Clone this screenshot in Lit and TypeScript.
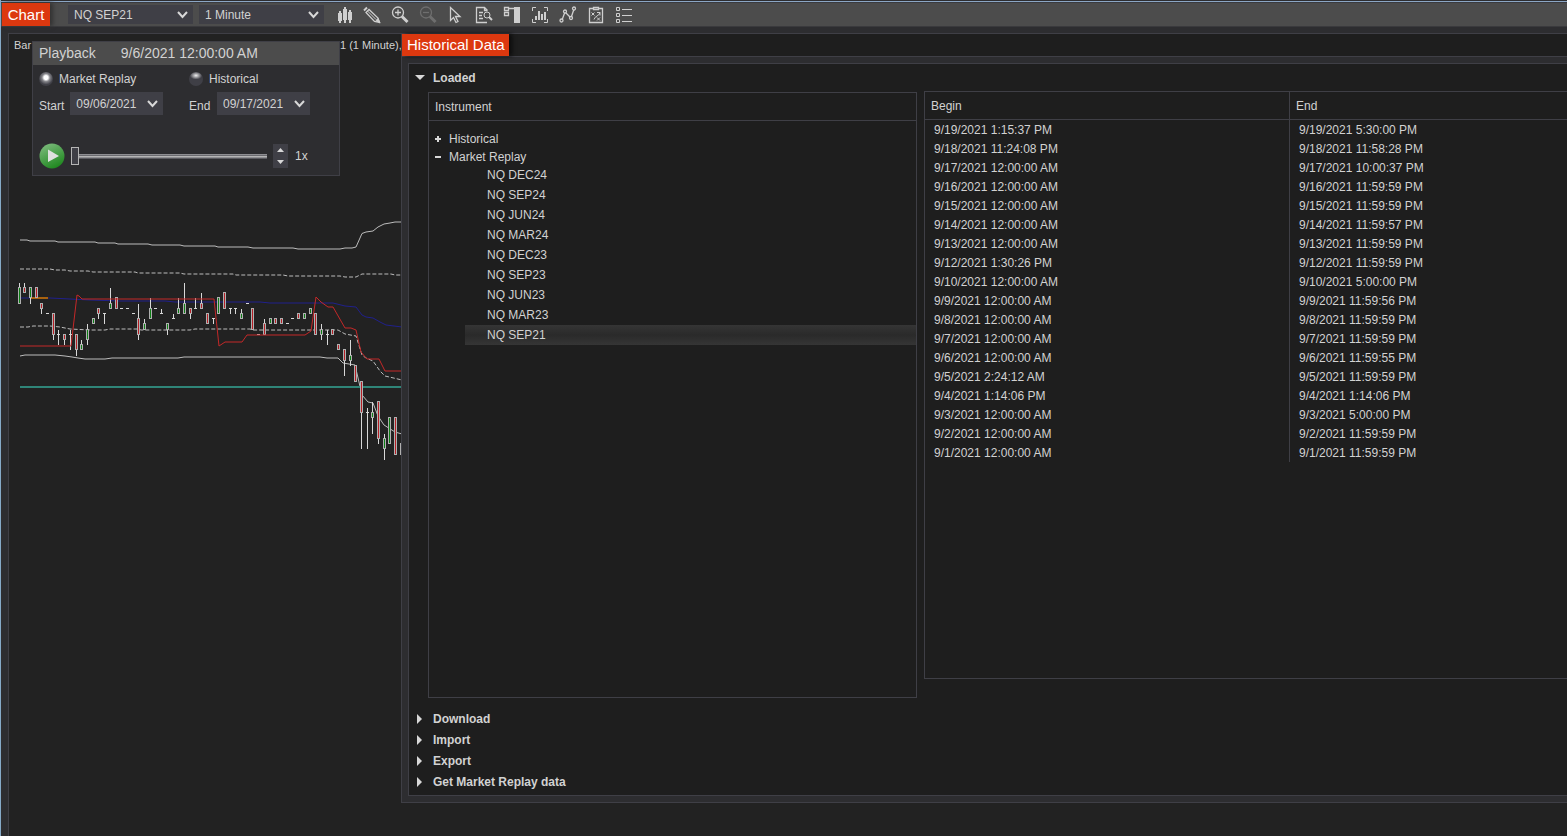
import { LitElement, html, css, svg } from "lit";
import { customElement, property, state } from "lit/decorators.js";
import { classMap } from "lit/directives/class-map.js";

type Candle = [x: number, high: number, top: number, bottom: number, low: number, kind: "up" | "down" | "flat"];

const CANDLES: Candle[] = [
  [19, 283, 287, 304, 304, "up"], [24, 283, 287, 293, 293, "down"], [30, 287, 287, 298, 304, "up"],
  [36, 287, 287, 298, 298, "down"], [41, 303, 303, 309, 314, "down"], [47, 313, 313, 313, 314, "flat"],
  [53, 313, 313, 335, 340, "down"], [58, 330, 334, 334, 345, "flat"], [64, 334, 334, 340, 345, "down"],
  [70, 330, 334, 334, 350, "flat"], [76, 334, 334, 350, 356, "down"], [81, 340, 344, 350, 350, "up"],
  [87, 324, 329, 340, 345, "up"], [93, 318, 318, 324, 324, "up"], [98, 308, 308, 314, 319, "down"],
  [104, 313, 313, 313, 324, "flat"], [110, 288, 303, 309, 309, "up"], [116, 297, 297, 309, 309, "down"],
  [121, 308, 308, 308, 309, "flat"], [127, 308, 308, 308, 309, "flat"], [133, 313, 313, 313, 314, "flat"],
  [138, 304, 318, 335, 340, "down"], [144, 319, 323, 330, 330, "up"], [150, 298, 308, 319, 319, "up"],
  [155, 308, 308, 308, 309, "flat"], [161, 309, 313, 313, 314, "flat"], [167, 323, 323, 330, 335, "up"],
  [173, 314, 318, 318, 319, "flat"], [178, 298, 308, 314, 314, "up"], [184, 283, 303, 314, 314, "up"],
  [190, 308, 308, 314, 319, "down"], [195, 298, 308, 308, 309, "flat"], [201, 293, 303, 309, 309, "down"],
  [207, 313, 313, 324, 324, "down"], [213, 318, 318, 318, 324, "flat"], [218, 297, 297, 314, 314, "up"],
  [224, 292, 292, 309, 309, "down"], [230, 308, 308, 308, 314, "flat"], [235, 308, 308, 308, 314, "flat"],
  [241, 309, 313, 319, 319, "up"], [247, 303, 303, 303, 304, "flat"], [252, 308, 308, 330, 330, "down"],
  [258, 334, 334, 334, 335, "flat"], [264, 319, 323, 335, 335, "down"], [270, 318, 318, 324, 324, "up"],
  [275, 318, 318, 324, 324, "down"], [281, 318, 318, 324, 324, "down"], [287, 323, 323, 323, 324, "flat"],
  [292, 318, 318, 318, 319, "flat"], [298, 313, 313, 319, 319, "down"], [304, 313, 313, 319, 319, "up"],
  [310, 308, 308, 314, 314, "up"], [315, 313, 313, 335, 335, "down"], [321, 324, 329, 335, 340, "up"],
  [327, 330, 334, 334, 345, "flat"], [332, 329, 329, 335, 335, "down"], [338, 344, 344, 350, 350, "down"],
  [344, 349, 349, 361, 376, "down"], [350, 340, 355, 361, 366, "up"], [355, 365, 365, 382, 382, "down"],
  [361, 381, 381, 413, 449, "down"], [367, 408, 412, 412, 449, "flat"], [372, 402, 412, 418, 434, "up"],
  [378, 401, 401, 439, 444, "down"], [384, 434, 438, 449, 460, "up"], [389, 417, 417, 444, 444, "up"],
  [395, 417, 417, 455, 455, "down"], [401, 443, 443, 455, 455, "up"],
];

const SERIES: { cls: string; points: string }[] = [
  { cls: "band", points: "20,240 27,240 30,241 55,241 58,242 95,242 98,243 115,243 118,244 148,244 152,245 180,245 184,246 215,246 218,247 248,247 253,248 293,248 298,249 340,249 345,248 352,248 356,247 362,233.500 366,232 373,231 378,227 384,224 390,223 395,222 402,222" },
  { cls: "band dashed", points: "20,269 50,269 55,270 65,270 70,271 88,271 93,272 135,272 138,273 180,273 184,274 233,274 236,275 283,275 288,276 340,276 345,277 356,277 362,274 391,274 395,275 402,275" },
  { cls: "blue", points: "20,298 50,298 70,299 90,300 120,301 165,301 175,302 260,302 270,303 333,303 345,306 356,307 362,315 366,317 373,318 380,322 386,325 402,327" },
  { cls: "band dashed", points: "20,327 28,327 33,326 50,326 60,327 70,329 90,330 105,330 110,329 138,329 141,330 190,330 195,329 250,329 253,330 338,330 345,334 356,336 362,355 366,358 373,361 380,371 385,376 402,380" },
  { cls: "band", points: "20,356 25,355 55,355 65,356 72,357 78,358 85,359 105,359 112,358 178,358 184,357 320,357 327,358 338,358 343,363 355,365 362,395 368,402 373,403 378,416 384,425 395,432 402,434" },
  { cls: "orange", points: "31,298 48,298" },
];
const RED = "20,346 71,346 77,295 79,296 82,299 214,299 219,346 225,342 242,342 247,335 305,335 311,331 316,297 321,302 328,307 333,307 345,328 351,328 356,330 361,352 367,359 379,359 385,371 402,371";

@customElement("price-chart")
export class PriceChart extends LitElement {
  static styles = css`
    :host { display: block; overflow: hidden; }
    svg { display: block; }
    polyline { fill: none; stroke-width: 1; }
    .band { stroke: #bcbcbc; }
    .dashed { stroke-dasharray: 4 2; }
    .blue { stroke: #20208c; }
    .orange { stroke: #a8620f; stroke-width: 2; }
    .red { stroke: #c42828; }
    .level { fill: #2f8578; }
    .wick { fill: #d8d8d8; }
    .body { fill: #b0b0b0; }
    .up { fill: #0c7d14; }
    .down { fill: #b51d24; }
  `;

  private candle([x, high, top, bottom, low, kind]: Candle) {
    return svg`
      <rect class="wick" x=${x} y=${high} width="1" height=${low - high}></rect>
      ${kind === "flat"
        ? svg`<rect class="wick" x=${x - 1} y=${top} width="3" height="1"></rect>`
        : svg`<rect class="body" x=${x - 1} y=${top} width="3" height=${bottom - top}></rect>
              <rect class=${kind} x=${x} y=${top + 1} width="1" height=${bottom - top - 2}></rect>`}`;
  }

  render() {
    return html`<svg width="393" height="440" viewBox="9 52 393 440" role="img" aria-label="NQ SEP21 1 minute price chart">
      ${SERIES.map((s) => svg`<polyline class=${s.cls} points=${s.points}></polyline>`)}
      <rect class="level" x="20" y="386" width="382" height="2"></rect>
      ${CANDLES.map((c) => this.candle(c))}
      <polyline class="red" points=${RED}></polyline>
    </svg>`;
  }
}

const TOOLS: { name: string; off?: boolean; art: unknown }[] = [
  { name: "Bars", art: svg`<path fill="currentColor" stroke="none" d="M8 9h4v8H8zM9 7h2v12H9zM13 5h4v11h-4zM14 3h2v16h-2zM18 8h4v8h-4zM19 6h2v13h-2z"/>` },
  { name: "Draw", art: svg`<path stroke-width="2" d="M6 6.500L9 3.500"/><path stroke-width="1.300" d="M8 8.500l3-3 9 8.500 1.500 4.500-5-1z"/><path d="M9.500 7l8.500 8.500"/><path fill="currentColor" d="M18 16.500l2-2 2 4.500z"/>` },
  { name: "Zoom in", art: svg`<circle cx="12" cy="8.500" r="5.500" stroke-width="1.300"/><path stroke-width="1.300" d="M9 8.500h6M12 5.500v6"/><path stroke-width="3" d="M16 12.500l5.500 5.500"/>` },
  { name: "Zoom out", off: true, art: svg`<circle cx="12" cy="8.500" r="5.500" stroke-width="1.300"/><path stroke-width="1.300" d="M9 8.500h6"/><path stroke-width="3" d="M16 12.500l5.500 5.500"/>` },
  { name: "Pointer", art: svg`<path stroke-width="1.300" d="M8.500 3.500v13l3-3 2.500 5 2-1-2.500-5h4.500z"/>` },
  { name: "Data box", art: svg`<path stroke-width="1.300" d="M17 18.500H6.500v-15h8l3 3M14.500 3.500v3h3M9 8.500h4M9 11.500h3M9 14.500h4"/><circle cx="17" cy="11" r="3"/><path stroke-width="2" d="M19 13l3 3"/>` },
  { name: "Chart trader", art: svg`<path fill="currentColor" stroke="none" d="M16 3h6v16h-6z"/><path stroke-width="1.300" d="M6.500 3.500h4v3h-4zM6.500 8.500h4v3h-4zM11 4.500h5"/>` },
  { name: "Indicators", art: svg`<path d="M10 3.500H6.500V7M18 3.500h3.500V7M10 18.500H6.500V15M18 18.500h3.500V15"/><path stroke-width="2" d="M10 16v-4M13 16V7M16 16v-6M19 16V8"/>` },
  { name: "Drawing objects", art: svg`<path stroke-width="1.300" d="M8 16l3-8 6 6 3-9"/><g fill="#4c4c4c" stroke-width="1.300"><circle cx="7.500" cy="16.500" r="1.500"/><circle cx="11" cy="7.500" r="1.500"/><circle cx="17" cy="14" r="1.500"/><circle cx="20" cy="4.500" r="1.500"/></g>` },
  { name: "Strategies", art: svg`<path stroke-width="1.300" d="M11 4.500H7.500v14h13v-14H17M11.500 3.500h5v2h-5z"/><path d="M9.500 8.500l3 3m0-3l-3 3M15 8.500h3v3M18 8.500c-1 4-5 3-6 7m3-2l3 3m0-3l-3 3"/>` },
  { name: "Properties", art: svg`<path d="M6.500 3.500h3v3h-3zM6.500 9.500h3v3h-3zM6.500 15.500h3v3h-3z"/><path d="M12 5.500h10M12 11.500h10M12 17.500h10"/>` },
];

const PERIODS: [string, string][] = [
  ["9/19/2021 1:15:37 PM", "9/19/2021 5:30:00 PM"],
  ["9/18/2021 11:24:08 PM", "9/18/2021 11:58:28 PM"],
  ["9/17/2021 12:00:00 AM", "9/17/2021 10:00:37 PM"],
  ["9/16/2021 12:00:00 AM", "9/16/2021 11:59:59 PM"],
  ["9/15/2021 12:00:00 AM", "9/15/2021 11:59:59 PM"],
  ["9/14/2021 12:00:00 AM", "9/14/2021 11:59:57 PM"],
  ["9/13/2021 12:00:00 AM", "9/13/2021 11:59:59 PM"],
  ["9/12/2021 1:30:26 PM", "9/12/2021 11:59:59 PM"],
  ["9/10/2021 12:00:00 AM", "9/10/2021 5:00:00 PM"],
  ["9/9/2021 12:00:00 AM", "9/9/2021 11:59:56 PM"],
  ["9/8/2021 12:00:00 AM", "9/8/2021 11:59:59 PM"],
  ["9/7/2021 12:00:00 AM", "9/7/2021 11:59:59 PM"],
  ["9/6/2021 12:00:00 AM", "9/6/2021 11:59:55 PM"],
  ["9/5/2021 2:24:12 AM", "9/5/2021 11:59:59 PM"],
  ["9/4/2021 1:14:06 PM", "9/4/2021 1:14:06 PM"],
  ["9/3/2021 12:00:00 AM", "9/3/2021 5:00:00 PM"],
  ["9/2/2021 12:00:00 AM", "9/2/2021 11:59:59 PM"],
  ["9/1/2021 12:00:00 AM", "9/1/2021 11:59:59 PM"],
];

const INSTRUMENTS = ["NQ DEC24", "NQ SEP24", "NQ JUN24", "NQ MAR24", "NQ DEC23", "NQ SEP23", "NQ JUN23", "NQ MAR23", "NQ SEP21"];

const base = css`
  * { box-sizing: border-box; }
  button, select, input { font: inherit; color: inherit; margin: 0; border: 0; background: none; padding: 0; }
  h1, h2, ul { margin: 0; padding: 0; font: inherit; list-style: none; }
`;

@customElement("pick-list")
export class PickList extends LitElement {
  static styles = [base, css`
    :host { display: block; }
    .box { display: grid; height: 100%; background: #3f3f46; }
    select, svg { grid-area: 1 / 1; }
    select { appearance: none; width: 100%; padding: 0 24px 0 6px; outline: 0; }
    svg { justify-self: end; align-self: center; margin-right: 5px; pointer-events: none; }
    path { fill: none; stroke: #d8d8d8; stroke-width: 2; }
  `];
  @property() value = "";
  @property() label = "";
  render() {
    return html`<div class="box">
      <select aria-label=${this.label}><option>${this.value}</option></select>
      <svg width="11" height="8" viewBox="0 0 11 8"><path d="M1 1l4.500 5L10 1"/></svg>
    </div>`;
  }
}

@customElement("playback-panel")
export class PlaybackPanel extends LitElement {
  static styles = [base, css`
    :host { display: block; border: 1px solid #3f3f46; background: #2d2d30; }
    .title { display: flex; gap: 25px; height: 23px; line-height: 23px; padding-left: 6px; background: #4c4c4c; font-size: 14px; }
    .grid { display: grid; grid-template-columns: 150px 1fr; padding: 4px 6px 0; }
    .mode { display: flex; align-items: center; gap: 6px; height: 20px; }
    .mode input {
      appearance: none; width: 14px; height: 14px; border-radius: 7px;
      background: radial-gradient(ellipse 6px 4px at 50% 25%, #f0f0f0, #3f3f46);
    }
    .mode input:checked { background: radial-gradient(circle at 50% 40%, #fff 2px, #85858a 4px, #3f3f46 7px); }
    .date { display: flex; gap: 6px; margin-top: 3px; }
    .date span { padding-top: 3px; line-height: 23px; min-width: 22px; }
    .date pick-list { width: 93px; height: 23px; }
    .transport { display: flex; align-items: center; height: 26px; margin: 25px 6px 6px; }
    .play { width: 26px; height: 26px; margin-right: 6px; }
    .play svg { display: block; }
    .speed { appearance: none; width: 196px; height: 20px; }
    .speed::-webkit-slider-runnable-track {
      height: 5px;
      background: linear-gradient(#8e8e92 1px, #6b6b70 1px 2px, #b5b5b5 2px 3px, #8e8e92 3px 4px, #5a5a5f 4px);
    }
    .speed::-webkit-slider-thumb {
      appearance: none; width: 8px; height: 18px; margin-top: -7px;
      background: #3f3f46; border: 1px solid #b5b5b5;
    }
    .step { display: grid; width: 15px; height: 24px; margin: 0 7px 0 6px; background: #3f3f46; }
    .step button { display: grid; place-items: center; }
    .step svg { fill: #d8d8d8; }
  `];
  render() {
    return html`
      <h2 class="title"><span>Playback</span><span>9/6/2021 12:00:00 AM</span></h2>
      <div class="grid">
        <label class="mode"><input type="radio" name="mode" checked />Market Replay</label>
        <label class="mode"><input type="radio" name="mode" />Historical</label>
        <div class="date"><span>Start</span><pick-list label="Start" value="09/06/2021"></pick-list></div>
        <div class="date"><span>End</span><pick-list label="End" value="09/17/2021"></pick-list></div>
      </div>
      <div class="transport">
        <button class="play" aria-label="Play">
          <svg width="26" height="26" viewBox="0 0 26 26">
            <defs><linearGradient id="g" x1="0.200" y1="0" x2="0.700" y2="1"><stop offset="0" stop-color="#7dbb7d"/><stop offset="1" stop-color="#1c861c"/></linearGradient></defs>
            <circle cx="13" cy="13" r="12.500" fill="url(#g)"/><path d="M9 6.500v12.500L20 13z" fill="#e0e0e0"/>
          </svg>
        </button>
        <input class="speed" type="range" min="0" max="100" value="0" aria-label="Speed" />
        <div class="step">
          <button aria-label="Faster"><svg width="7" height="4" viewBox="0 0 7 4"><path d="M0 4l3.500-4L7 4z"/></svg></button>
          <button aria-label="Slower"><svg width="7" height="4" viewBox="0 0 7 4"><path d="M0 0l3.500 4L7 0z"/></svg></button>
        </div>
        <span>1x</span>
      </div>`;
  }
}

@customElement("historical-data")
export class HistoricalData extends LitElement {
  static styles = [base, css`
    :host { display: flex; flex-direction: column; border: solid #3f3f46; border-width: 0 0 1px 1px; background: #2d2d30; }
    .head { display: flex; height: 23px; background: #1e1e1e; border-bottom: 1px solid #3f3f46; }
    .tab { height: 22px; line-height: 22px; padding: 0 4px 0 5px; background: #dc380f; color: #fff; font-size: 15px; white-space: nowrap; box-shadow: 3px 0 4px #0c0c0c; }
    .body { flex: 1; display: flex; flex-direction: column; min-height: 0; margin: 6px 0 6px 6px; border: solid #3f3f46; border-width: 1px 0 1px 1px; background: #1e1e1e; padding: 3px 0 3px 6px; }
    .fold { display: flex; align-items: center; flex: none; gap: 8px; height: 21px; font-weight: bold; text-align: left; }
    .fold svg { width: 10px; height: 10px; fill: #d8d8d8; }
    .panes { flex: 1; display: grid; grid-template-columns: 489fr 643fr; gap: 7px; min-height: 0; margin: 3px 0 10px 13px; }
    .tree { margin-top: 1px; border: 1px solid #3f3f46; }
    .caption { height: 28px; line-height: 28px; padding-left: 6px; border-bottom: 1px solid #3f3f46; }
    .nodes { padding-top: 9px; }
    .node { display: flex; align-items: center; gap: 7px; height: 18px; padding-left: 5px; }
    .node svg { width: 8px; height: 8px; fill: #d8d8d8; }
    .leaves { margin: -1px 0 0 36px; }
    .leaf { display: block; width: 100%; height: 20px; padding-left: 22px; text-align: left; }
    .leaf.on { background: linear-gradient(#353535, #2a2a2a 50%, #353535); }
    .list { margin-bottom: 19px; border: solid #3f3f46; border-width: 1px 0 1px 1px; }
    table { width: 100%; border-collapse: separate; border-spacing: 0; table-layout: fixed; }
    th, td { text-align: left; font-weight: normal; padding: 2px 0 0 9px; height: 19px; line-height: 17px; }
    th { height: 28px; line-height: 25px; padding-left: 6px; border-bottom: 1px solid #3f3f46; }
    th:first-child { width: 364px; }
    th + th, td + td { border-left: 1px solid #3f3f46; }
  `];
  @state() private selected = "NQ SEP21";

  private fold(name: string) {
    return html`<button class="fold" aria-expanded="false"><svg viewBox="0 0 10 10"><path d="M2 0l5 5-5 5z"/></svg>${name}</button>`;
  }

  render() {
    return html`
      <div class="head"><h2 class="tab">Historical Data</h2></div>
      <div class="body">
        <button class="fold" aria-expanded="true"><svg viewBox="0 0 10 10"><path d="M0 2h10L5 7z"/></svg>Loaded</button>
        <div class="panes">
          <div class="tree">
            <div class="caption">Instrument</div>
            <div class="nodes">
              <button class="node"><svg viewBox="0 0 8 8"><path d="M1 3h2V1h2v2h2v2H5v2H3V5H1z"/></svg>Historical</button>
              <button class="node"><svg viewBox="0 0 8 8"><path d="M1 3h6v2H1z"/></svg>Market Replay</button>
              <ul class="leaves">
                ${INSTRUMENTS.map((n) => html`<li><button
                  class=${classMap({ leaf: true, on: n === this.selected })}
                  @click=${() => (this.selected = n)}>${n}</button></li>`)}
              </ul>
            </div>
          </div>
          <div class="list">
            <table>
              <thead><tr><th>Begin</th><th>End</th></tr></thead>
              <tbody>${PERIODS.map(([b, e]) => html`<tr><td>${b}</td><td>${e}</td></tr>`)}</tbody>
            </table>
          </div>
        </div>
        ${["Download", "Import", "Export", "Get Market Replay data"].map((n) => this.fold(n))}
      </div>`;
  }
}

@customElement("app-root")
export class AppRoot extends LitElement {
  static styles = [base, css`
    :host {
      display: flex; flex-direction: column; height: 100vh; overflow: hidden;
      border-left: 1px solid #86aac8; background: #2d2d30; color: #d2d2d2;
      font: 12px "Liberation Sans", Arial, sans-serif;
    }
    .edge { height: 3px; background: linear-gradient(#2d2d30 1px, #8ba6c4 1px 2px, #3a3a3e 2px); }
    .bar { display: flex; align-items: center; height: 24px; padding-left: 1px; background: #4c4c4c; border-bottom: 1px solid #3a3a3d; }
    .tab { height: 23px; line-height: 23px; width: 48px; text-align: center; background: #dc380f; color: #fff; font-size: 15px; box-shadow: 3px 0 4px #333; }
    .bar pick-list { width: 125px; height: 19px; margin-right: 6px; }
    .bar pick-list:first-of-type { margin-left: 18px; }
    .tool { width: 28px; height: 22px; color: #cfcfcf; }
    .tool svg { display: block; fill: none; stroke: currentColor; }
    .tool:disabled { color: #6e6e6e; }
    .desk { position: relative; flex: 1; min-height: 0; margin: 6px 0 0 7px; border: solid #3f3f46; border-width: 1px 0 0 1px; background: #222; }
    .legend { display: flex; height: 22px; line-height: 22px; padding-left: 5px; font-size: 11px; white-space: nowrap; }
    .legend span { width: 326px; }
    price-chart { margin-top: -4px; }
    playback-panel { position: absolute; left: 23px; top: 7px; width: 308px; }
    historical-data { position: absolute; left: 392px; right: 0; top: 0; bottom: 33px; }
  `];

  render() {
    return html`
      <div class="edge"></div>
      <header class="bar">
        <h1 class="tab">Chart</h1>
        <pick-list label="Instrument" value="NQ SEP21"></pick-list>
        <pick-list label="Interval" value="1 Minute"></pick-list>
        ${TOOLS.map((t) => html`<button class="tool" aria-label=${t.name} ?disabled=${!!t.off}>
          <svg width="28" height="22" viewBox="0 0 28 22">${t.art}</svg></button>`)}
      </header>
      <main class="desk">
        <div class="legend"><span>Bar</span>1 (1 Minute),2</div>
        <price-chart></price-chart>
        <playback-panel></playback-panel>
        <historical-data></historical-data>
      </main>`;
  }
}
